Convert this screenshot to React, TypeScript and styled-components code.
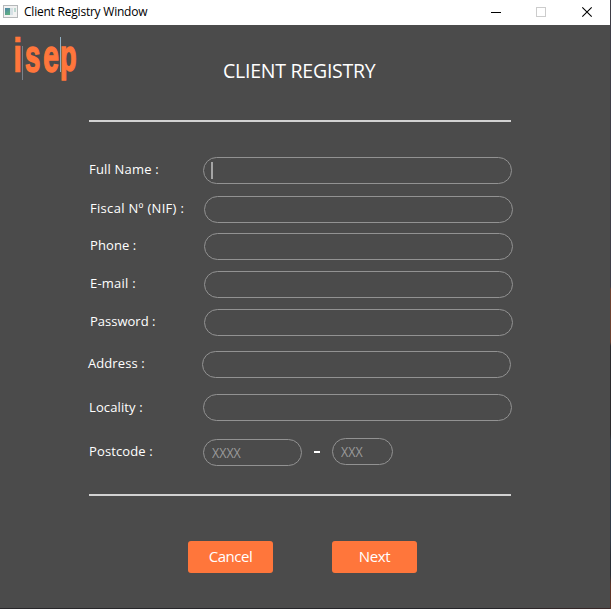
import React from 'react';
import styled, { createGlobalStyle } from 'styled-components';

const GlobalStyle = createGlobalStyle`
  * { box-sizing: border-box; }
  body { margin: 0; background: #262529; overflow: hidden; }
`;

const Desktop = styled.div`
  width: 611px;
  height: 609px;
  padding: 0 1px 1px 0;
  background:
    linear-gradient(90deg, #29282b, #252529 80%, #3b2a2a) 0 608px / 610px 1px no-repeat,
    linear-gradient(#3f3e46 0 287px, #6b4130 289px 342px, #2b2a2c 346px 434px, #303a46 440px 540px, #292d34 555px 575px, #5c3428 585px);
  font-family: 'Open Sans', 'Noto Sans', sans-serif;
`;
const Window = styled.div`
  width: 610px;
  height: 608px;
  background: #4b4b4b;
  display: flex;
  flex-direction: column;
`;
const TitleBar = styled.header`
  display: flex;
  height: 25px;
  flex: none;
  background: #fff;
  align-items: flex-start;
`;
const AppIcon = styled.svg`
  display: block;
  margin: 5px 0 0 3px;
`;
const WindowTitle = styled.span`
  margin-left: 6px;
  width: 440px;
  font: 12px/24px 'Open Sans', sans-serif;
  letter-spacing: -0.22px;
  color: #000;
  white-space: nowrap;
`;
const Controls = styled.svg`
  display: block;
`;
const Header = styled.div`
  display: flex;
  height: 95px;
  flex: none;
`;
const Logo = styled.svg`
  display: block;
`;
const Heading = styled.h1`
  margin: 33px 0 0 133px;
  font-size: 19.5px;
  line-height: 26px;
  font-weight: 400;
  letter-spacing: -0.24px;
  white-space: nowrap;
  color: #fff;
`;
const Divider = styled.div`
  width: 422px;
  height: 2px;
  flex: none;
  margin-left: 89px;
  background: #d2d2d2;
`;
const Form = styled.form`
  display: flex;
  flex-direction: column;
  height: 372px;
  padding-top: 35px;
`;
const Row = styled.div<{ $gap: number; $shift: number }>`
  display: flex;
  height: 27px;
  flex: none;
  margin-top: ${p => p.$gap}px;
  margin-left: ${p => p.$shift}px;
`;
const Label = styled.label<{ $spacing: number; $width: number; $top: number }>`
  width: ${p => p.$width}px;
  padding-top: ${p => p.$top}px;
  font-size: 13px;
  line-height: 24px;
  letter-spacing: ${p => p.$spacing}px;
  white-space: nowrap;
  color: #fff;
`;
const Field = styled.div<{ $width: number; $raised?: boolean }>`
  display: flex;
  align-items: center;
  width: ${p => p.$width}px;
  height: 27px;
  margin-top: ${p => (p.$raised ? -1 : 0)}px;
  padding-left: 8px;
  border: 1px solid #929292;
  border-radius: 14px;
  font-size: 14px;
  line-height: 25px;
  color: #9b9b9b;
`;
const Placeholder = styled.span`
  padding-bottom: 1px;
  transform: scaleX(0.89);
  transform-origin: left;
`;
const Caret = styled.span`
  width: 2px;
  height: 17px;
  margin-left: -1px;
  background: #a5a5a5;
`;
const Dash = styled.span`
  width: 6px;
  height: 2px;
  margin: 12px 12px 0 12px;
  background: #fff;
`;
const Actions = styled.div`
  display: flex;
  gap: 59px;
  margin: 45px 0 0 188px;
`;
const Button = styled.button<{ $spacing: number }>`
  width: 85px;
  height: 32px;
  padding: 0 0 2px;
  border: 0;
  border-radius: 3px;
  background: #ff763b;
  color: #fff;
  font: 15px/30px 'Open Sans', sans-serif;
  letter-spacing: ${p => p.$spacing}px;
`;

const fields = [
  { label: 'Full Name :', x: 89, input: 203, gap: 0, spacing: 0.2, top: 0 },
  { label: 'Fiscal Nº (NIF) :', x: 90, input: 204, gap: 12, spacing: 0.31, top: 0 },
  { label: 'Phone :', x: 90, input: 204, gap: 10, spacing: 0.1, top: 0 },
  { label: 'E-mail :', x: 90, input: 204, gap: 11, spacing: 0.22, top: 0 },
  { label: 'Password :', x: 90, input: 204, gap: 11, spacing: 0, top: 0 },
  { label: 'Address :', x: 88, input: 202, gap: 15, spacing: 0.08, top: 0 },
  { label: 'Locality :', x: 89, input: 203, gap: 16, spacing: 0.12, top: 1 },
];

export default function App() {
  return (
    <Desktop>
      <GlobalStyle />
      <Window>
        <TitleBar>
          <AppIcon width="15" height="13" viewBox="0 0 15 13">
            <defs>
              <linearGradient id="pane" x2="0.4" y2="1">
                <stop stopColor="#4d83a9" />
                <stop offset="1" stopColor="#5fae83" />
              </linearGradient>
            </defs>
            <rect x=".5" y=".5" width="14" height="12" fill="#f2f2f2" stroke="#b5b8ba" />
            <rect x="2" y="3" width="5" height="7" fill="url(#pane)" />
            <rect x="7" y="3" width="3" height="7" fill="#d5e0e5" />
            <rect x="11" y="3" width="2" height="4" fill="#bcd8cf" />
          </AppIcon>
          <WindowTitle>Client Registry Window</WindowTitle>
          <Controls width="140" height="25" viewBox="464 0 140 25">
            <path d="M491 12.5h10" stroke="#000" />
            <rect x="536.5" y="7.5" width="9" height="9" fill="none" stroke="#ccc" />
            <path d="M582.3 7.3l9.4 9.4M591.7 7.3l-9.4 9.4" stroke="#000" strokeWidth="1.1" />
          </Controls>
        </TitleBar>
        <Header>
          <Logo width="90" height="70" viewBox="0 25 90 70">
            <g fill="#ff763b" stroke="#ff763b" strokeWidth="1.6" fontFamily="Liberation Sans" fontWeight="700" fontSize="46">
              <text strokeWidth="0.6" fontSize="48" transform="translate(12.9 72) scale(.7 1)">i</text>
              <text transform="translate(25 71.6) scale(.6 1)">s</text>
              <text transform="translate(43.2 71.6) scale(.61 1)">e</text>
              <text transform="translate(60 71) scale(.59 .96)">p</text>
            </g>
            <path d="M22.5 46v34" stroke="#79828a" />
            <path d="M60.5 37v35" stroke="#8fb0c4" />
          </Logo>
          <Heading>CLIENT REGISTRY</Heading>
        </Header>
        <Divider />
        <Form>
          {fields.map((f, i) => (
            <Row key={f.label} $gap={f.gap} $shift={f.x}>
              <Label $spacing={f.spacing} $width={f.input - f.x} $top={f.top}>{f.label}</Label>
              <Field $width={309}>{i === 0 && <Caret />}</Field>
            </Row>
          ))}
          <Row $gap={18} $shift={89}>
            <Label $spacing={0.12} $width={114} $top={0}>Postcode :</Label>
            <Field $width={99}><Placeholder>XXXX</Placeholder></Field>
            <Dash />
            <Field $width={61} $raised><Placeholder>XXX</Placeholder></Field>
          </Row>
        </Form>
        <Divider />
        <Actions>
          <Button $spacing={-0.5}>Cancel</Button>
          <Button $spacing={-0.4}>Next</Button>
        </Actions>
      </Window>
    </Desktop>
  );
}
